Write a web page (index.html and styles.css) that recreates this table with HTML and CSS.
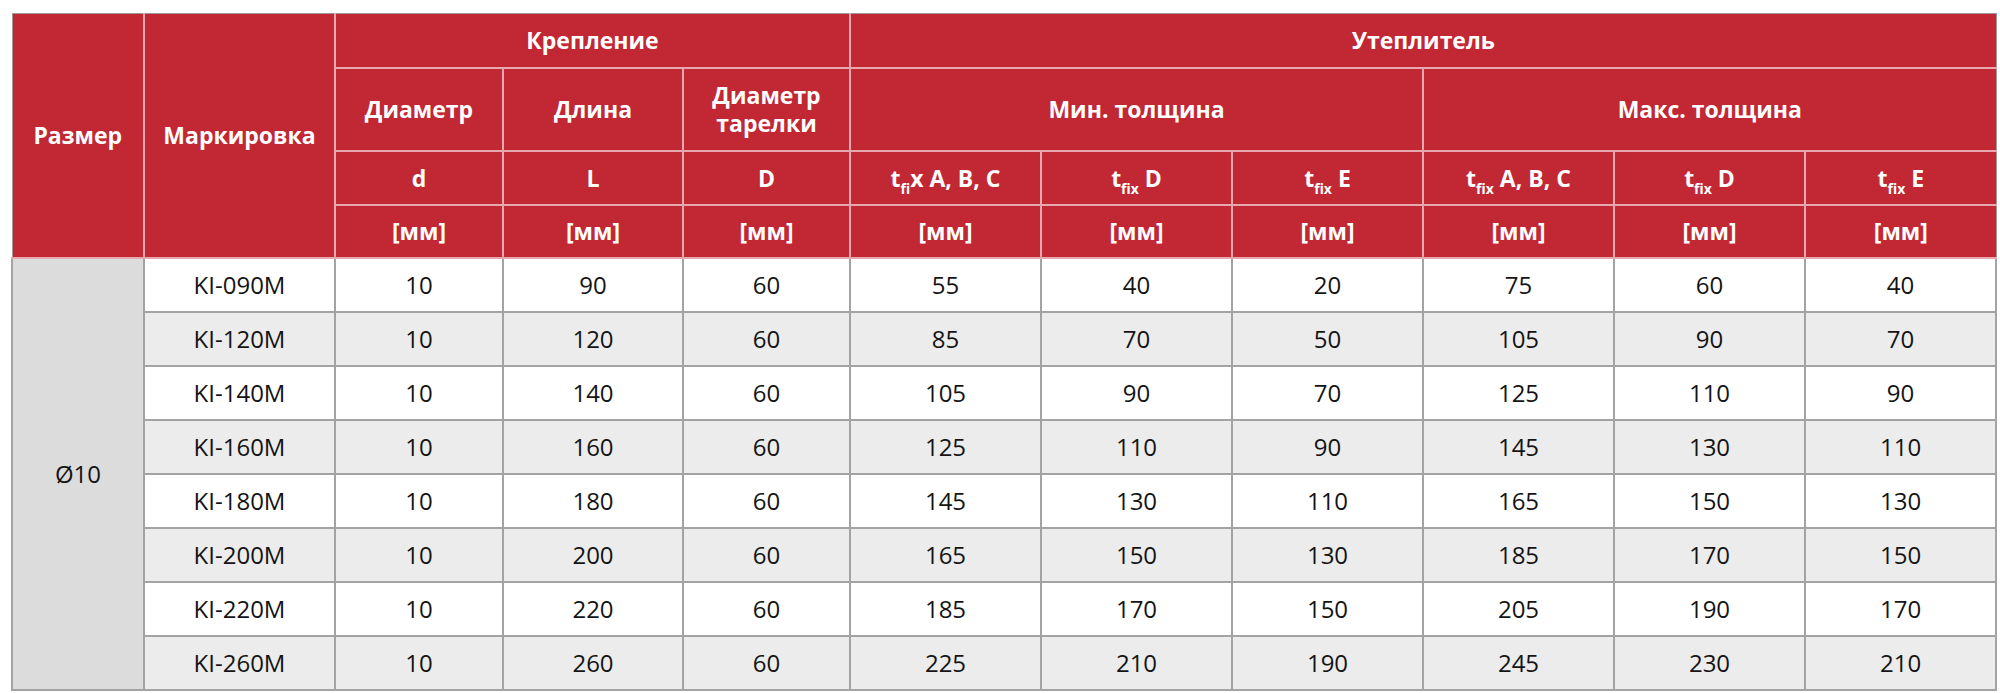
FILE: index.html
```html
<!DOCTYPE html>
<html lang="ru">
<head>
<meta charset="utf-8">
<title>Таблица</title>
<link rel="stylesheet" href="styles.css">
</head>
<body>
<table class="spec">
  <colgroup>
    <col class="c-size">
    <col class="c-mark">
    <col class="c-d">
    <col class="c-l">
    <col class="c-dd">
    <col class="c-t"><col class="c-t"><col class="c-t">
    <col class="c-t"><col class="c-t"><col class="c-t">
  </colgroup>
  <thead>
    <tr class="r1">
      <th rowspan="4">Размер</th>
      <th rowspan="4">Маркировка</th>
      <th colspan="3">Крепление</th>
      <th colspan="6">Утеплитель</th>
    </tr>
    <tr class="r2">
      <th>Диаметр</th>
      <th>Длина</th>
      <th>Диаметр<br>тарелки</th>
      <th colspan="3">Мин. толщина</th>
      <th colspan="3">Макс. толщина</th>
    </tr>
    <tr class="r3">
      <th>d</th>
      <th>L</th>
      <th>D</th>
      <th>t<sub>fi</sub>x A, B, C</th>
      <th>t<sub>fix</sub> D</th>
      <th>t<sub>fix</sub> E</th>
      <th>t<sub>fix</sub> A, B, C</th>
      <th>t<sub>fix</sub> D</th>
      <th>t<sub>fix</sub> E</th>
    </tr>
    <tr class="r4">
      <th>[мм]</th><th>[мм]</th><th>[мм]</th>
      <th>[мм]</th><th>[мм]</th><th>[мм]</th>
      <th>[мм]</th><th>[мм]</th><th>[мм]</th>
    </tr>
  </thead>
  <tbody>
    <tr><td class="size" rowspan="8">Ø10</td><td>KI-090M</td><td>10</td><td>90</td><td>60</td><td>55</td><td>40</td><td>20</td><td>75</td><td>60</td><td>40</td></tr>
    <tr><td>KI-120M</td><td>10</td><td>120</td><td>60</td><td>85</td><td>70</td><td>50</td><td>105</td><td>90</td><td>70</td></tr>
    <tr><td>KI-140M</td><td>10</td><td>140</td><td>60</td><td>105</td><td>90</td><td>70</td><td>125</td><td>110</td><td>90</td></tr>
    <tr><td>KI-160M</td><td>10</td><td>160</td><td>60</td><td>125</td><td>110</td><td>90</td><td>145</td><td>130</td><td>110</td></tr>
    <tr><td>KI-180M</td><td>10</td><td>180</td><td>60</td><td>145</td><td>130</td><td>110</td><td>165</td><td>150</td><td>130</td></tr>
    <tr><td>KI-200M</td><td>10</td><td>200</td><td>60</td><td>165</td><td>150</td><td>130</td><td>185</td><td>170</td><td>150</td></tr>
    <tr><td>KI-220M</td><td>10</td><td>220</td><td>60</td><td>185</td><td>170</td><td>150</td><td>205</td><td>190</td><td>170</td></tr>
    <tr><td>KI-260M</td><td>10</td><td>260</td><td>60</td><td>225</td><td>210</td><td>190</td><td>245</td><td>230</td><td>210</td></tr>
  </tbody>
</table>
</body>
</html>
```

FILE: styles.css
```css
html, body {
  margin: 0;
  padding: 0;
  background: #ffffff;
}

body {
  font-family: "Open Sans", "Noto Sans", "DejaVu Sans", sans-serif;
}

.spec {
  margin: 13px 0 0 11px;
  width: 1985px;
  table-layout: fixed;
  border-collapse: collapse;
  border: 1px solid #9a9a9a;
}

.c-size { width: 132px; }
.c-mark { width: 191px; }
.c-d { width: 168px; }
.c-l { width: 180px; }
.c-dd { width: 167px; }
.c-t { width: 191px; }

.spec th {
  background: #c22734;
  color: #ffffff;
  font-weight: 700;
  font-size: 23px;
  line-height: 28px;
  text-align: center;
  vertical-align: middle;
  padding: 0;
  border: 2px solid #e6a8ae;
}

.spec thead tr:first-child th { border-top: 1px solid #9a9a9a; }
.spec thead th:first-child { border-left: 1px solid #9a9a9a; }
.spec thead tr:first-child th:last-child { border-right: 1px solid #9a9a9a; }
.spec thead tr.r2 th:last-child,
.spec thead tr.r3 th:last-child,
.spec thead tr.r4 th:last-child { border-right: 1px solid #9a9a9a; }

.spec sub {
  font-size: 14px;
  line-height: 0;
  vertical-align: -7px;
}

.r1 { height: 54px; }
.r2 { height: 83px; }
.r3 { height: 54px; }
.r4 { height: 53px; }

.spec td {
  height: 52px;
  padding: 0;
  font-size: 24px;
  line-height: 28px;
  color: #141414;
  text-align: center;
  vertical-align: middle;
  border: 2px solid #a3a3a3;
  background: #ffffff;
}

.spec tbody tr:nth-child(even) td { background: #ececec; }
.spec tbody td.size { background: #dcdcdc; }
```
